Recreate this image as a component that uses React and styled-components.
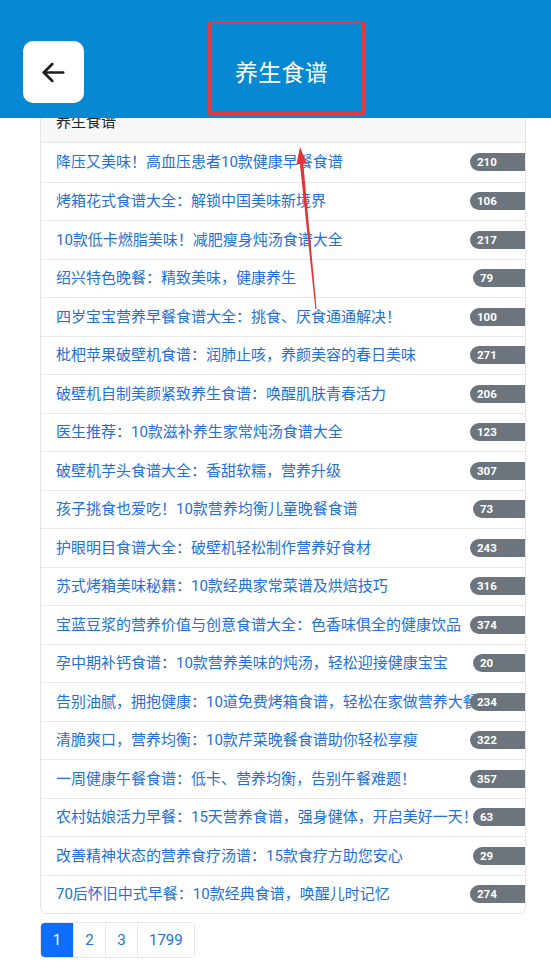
import React from "react";
import styled, { createGlobalStyle } from "styled-components";

const GlobalStyle = createGlobalStyle`
  html, body {
    margin: 0;
    padding: 0;
    background: #fff;
    font-family: Roboto, "Noto Sans CJK SC", "Noto Sans", sans-serif;
  }
  * { box-sizing: border-box; }
`;

const recipes = [
  { title: "降压又美味！高血压患者10款健康早餐食谱", count: 210 },
  { title: "烤箱花式食谱大全：解锁中国美味新境界", count: 106 },
  { title: "10款低卡燃脂美味！减肥瘦身炖汤食谱大全", count: 217 },
  { title: "绍兴特色晚餐：精致美味，健康养生", count: 79 },
  { title: "四岁宝宝营养早餐食谱大全：挑食、厌食通通解决！", count: 100 },
  { title: "枇杷苹果破壁机食谱：润肺止咳，养颜美容的春日美味", count: 271 },
  { title: "破壁机自制美颜紧致养生食谱：唤醒肌肤青春活力", count: 206 },
  { title: "医生推荐：10款滋补养生家常炖汤食谱大全", count: 123 },
  { title: "破壁机芋头食谱大全：香甜软糯，营养升级", count: 307 },
  { title: "孩子挑食也爱吃！10款营养均衡儿童晚餐食谱", count: 73 },
  { title: "护眼明目食谱大全：破壁机轻松制作营养好食材", count: 243 },
  { title: "苏式烤箱美味秘籍：10款经典家常菜谱及烘焙技巧", count: 316 },
  { title: "宝蓝豆浆的营养价值与创意食谱大全：色香味俱全的健康饮品", count: 374 },
  { title: "孕中期补钙食谱：10款营养美味的炖汤，轻松迎接健康宝宝", count: 20 },
  { title: "告别油腻，拥抱健康：10道免费烤箱食谱，轻松在家做营养大餐", count: 234 },
  { title: "清脆爽口，营养均衡：10款芹菜晚餐食谱助你轻松享瘦", count: 322 },
  { title: "一周健康午餐食谱：低卡、营养均衡，告别午餐难题！", count: 357 },
  { title: "农村姑娘活力早餐：15天营养食谱，强身健体，开启美好一天！", count: 63 },
  { title: "改善精神状态的营养食疗汤谱：15款食疗方助您安心", count: 29 },
  { title: "70后怀旧中式早餐：10款经典食谱，唤醒儿时记忆", count: 274 },
];

const pages = ["1", "2", "3", "1799"];

const Page = styled.div`
  position: relative;
  width: 551px;
  min-height: 966px;
  overflow: hidden;
`;

const Header = styled.header`
  position: relative;
  z-index: 2;
  height: 118px;
  background: #0688d2;
  display: flex;
  align-items: flex-start;
  padding: 21px 0 0 23px;
`;

const BackButton = styled.button`
  margin-top: 20px;
  width: 61px;
  height: 62px;
  border: none;
  border-radius: 10px;
  background: #fff;
  display: flex;
  align-items: center;
  justify-content: center;
  color: #1d1d1d;
  padding: 0;
`;

const TitleFrame = styled.div`
  margin-left: 124px;
  width: 157px;
  height: 94px;
  border: 3px solid #e2393f;
  border-radius: 2px;
  display: flex;
  align-items: center;
  justify-content: center;
  padding: 6px 10px 0 0;
`;

const Title = styled.h1`
  margin: 0;
  color: #fff;
  font-size: 23px;
  font-weight: 400;
  letter-spacing: 0.3px;
`;

const Card = styled.section`
  position: relative;
  z-index: 1;
  margin: -16px 25px 0 40px;
  border: 1px solid #e3e5e8;
  border-radius: 6px;
  overflow: hidden;
  background: #fff;
`;

const CardHeader = styled.div`
  height: 40px;
  padding: 7px 15px 8px;
  line-height: 24px;
  font-size: 15px;
  color: #212529;
  background: #f7f7f8;
  border-bottom: 1px solid #e6e7e9;
`;

const List = styled.ul`
  list-style: none;
  margin: 0;
  padding: 0;
`;

const Item = styled.li`
  position: relative;
  height: 38.5px;
  display: flex;
  align-items: center;
  padding: 0 15px 3px;
  border-top: ${(p) => (p.$first ? "none" : "1px solid #e8e9eb")};
`;

const ItemLink = styled.a`
  font-size: 15px;
  color: #2270d8;
  text-decoration: none;
  white-space: nowrap;
`;

const Badge = styled.span`
  position: absolute;
  top: 50%;
  left: ${(p) => 429 + (3 - String(p.$n).length) * 3}px;
  transform: translateY(-50%);
  height: 18px;
  line-height: 18px;
  padding: 0 40px 0 7px;
  border-radius: 9px;
  background: #6c757d;
  color: #fff;
  font-family: Roboto, "Liberation Sans", sans-serif;
  font-size: 11.5px;
  font-weight: 700;
`;

const Pagination = styled.nav`
  display: flex;
  margin: 8px 0 0 40px;
  width: fit-content;
  border: 1px solid #e3e5e8;
  border-radius: 5px;
  overflow: hidden;
`;

const PageButton = styled.a`
  height: 34px;
  min-width: 32px;
  padding: 0 11px;
  display: flex;
  align-items: center;
  justify-content: center;
  font-size: 15px;
  color: ${(p) => (p.$active ? "#fff" : "#2270d8")};
  background: ${(p) => (p.$active ? "#0d6efd" : "#fff")};
  border-left: ${(p) => (p.$first ? "none" : "1px solid #e6e7e9")};
  text-decoration: none;
`;

const Annotation = styled.svg`
  position: absolute;
  top: 0;
  left: 0;
  z-index: 3;
  pointer-events: none;
`;

const ArrowLeft = () => (
  <svg width="29" height="29" viewBox="0 0 24 24" fill="none" stroke="currentColor" strokeWidth="2.2" strokeLinecap="round" strokeLinejoin="round">
    <path d="M20 12H4" />
    <path d="M11 5l-7 7 7 7" />
  </svg>
);

export default function App() {
  return (
    <>
      <GlobalStyle />
      <Page>
        <Header>
          <BackButton aria-label="返回">
            <ArrowLeft />
          </BackButton>
          <TitleFrame>
            <Title>养生食谱</Title>
          </TitleFrame>
        </Header>

        <Card>
          <CardHeader>养生食谱</CardHeader>
          <List>
            {recipes.map((r, i) => (
              <Item key={r.title} $first={i === 0}>
                <ItemLink href="#">{r.title}</ItemLink>
                <Badge $n={r.count}>{r.count}</Badge>
              </Item>
            ))}
          </List>
        </Card>

        <Pagination>
          {pages.map((p, i) => (
            <PageButton key={p} href="#" $active={i === 0} $first={i === 0}>
              {p}
            </PageButton>
          ))}
        </Pagination>

        <Annotation width="551" height="966" viewBox="0 0 551 966">
          <polygon
            points="300,147 306.8,163.4 303.3,163.7 316.6,309 315.4,309 299.9,164.1 296.4,164.4"
            fill="#e5343a"
          />
        </Annotation>
      </Page>
    </>
  );
}
